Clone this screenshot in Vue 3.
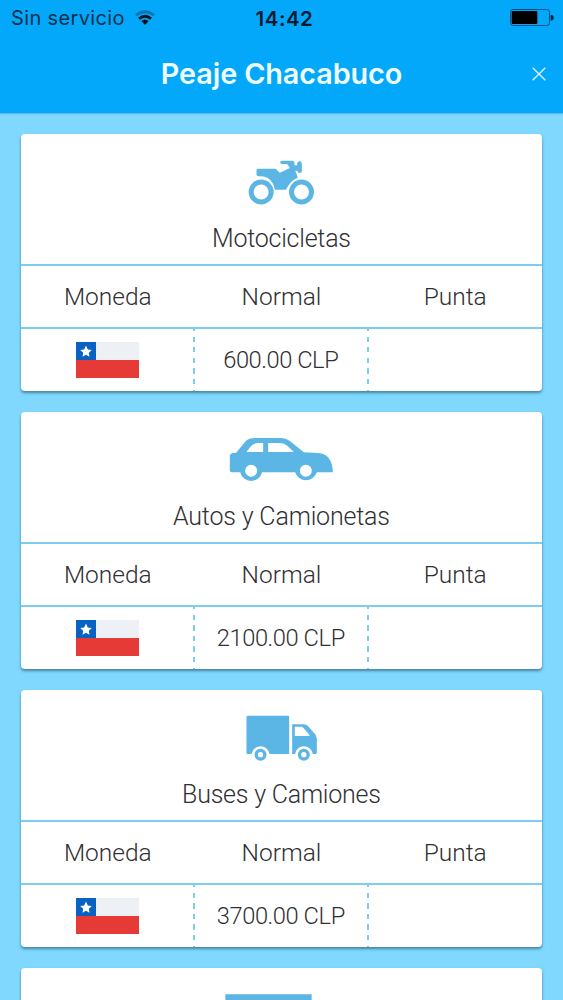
<script setup>
const cards = [
  { kind: 'moto', name: 'Motocicletas', price: '600.00 CLP', box: '-23.5 0 360 210', nameWidth: 139, priceWidth: 115.5 },
  { kind: 'car', name: 'Autos y Camionetas', price: '2100.00 CLP', box: '6.5 -6 360 210', nameWidth: 217, priceWidth: 128.5 },
  { kind: 'truck', name: 'Buses y Camiones', price: '3700.00 CLP', box: '-23.5 3 360 210', nameWidth: 199, priceWidth: 128.5 },
  { kind: 'bus', name: '', price: '', box: '0 0 360 210' }
]
</script>

<template>
  <main class="screen">
    <header class="header">
      <div class="status">
        <div class="carrier">
          <span>Sin servicio</span>
          <svg class="wifi" viewBox="0 0 66 54">
            <path d="M3 16Q33-9 63 16L57 22Q33 3 9 22Z" fill="#0874b4" />
            <path d="M12 26Q33 9 54 26L48 32Q33 20 18 32Z" fill="#02121d" />
            <path d="M22 36Q33 27 44 36L33 48Z" fill="#02121d" />
          </svg>
        </div>
        <strong class="time">14:42</strong>
        <svg class="battery" viewBox="0 0 132 54">
          <rect x="1.5" y="1.5" width="117" height="48" rx="8" fill="none" stroke="#07507b" stroke-width="3" />
          <rect x="5" y="6" width="77" height="39" rx="3" fill="#000" />
          <path d="M122 17Q131 18 131 26T122 35Z" fill="#02233a" />
        </svg>
      </div>
      <div class="titlebar">
        <h1>Peaje Chacabuco</h1>
        <svg class="close" viewBox="0 0 14 14"><path d="M.7.7l12.6 12.6M13.3.7L.7 13.3" /></svg>
      </div>
    </header>

    <section class="list">
      <article v-for="card in cards" :key="card.kind" class="card">
        <div class="vehicle">
          <svg class="icon" :viewBox="card.box">
            <g v-if="card.kind === 'moto'">
              <circle cx="94" cy="141" r="30" fill="none" stroke="#5bb6e5" stroke-width="15" />
              <circle cx="215" cy="141" r="30" fill="none" stroke="#5bb6e5" stroke-width="15" />
              <path d="M84 71H137L150 83L180 69L172 57H156Q151 57 151 52T156 47H187Q194 47 194 55V61H202V54Q204 49 209 49Q216 49 216 55V78Q216 84 210 84Q204 84 202 77H196L204 98Q184 106 175 123L168 134H135Q132 111 113 98Q104 94 87 94Q80 94 80 88V76Q80 71 84 71Z" />
              <path d="M190 76L198 99" stroke="#5bb6e5" stroke-width="9" fill="none" />
            </g>
            <g v-else-if="card.kind === 'car'">
              <path fill-rule="evenodd" d="M30 91Q30 84 49 83L78 48Q87 39 105 39H184Q199 39 210 48L252 82L294 84Q319 85 330 104Q339 119 339 142H291A34 34 0 0 1 226 142H127A34 34 0 0 1 61 142H36Q30 142 30 136ZM80 81H130V54H114Q101 54 92 65ZM145 81H222L202 62Q193 54 181 54H145Z" />
              <circle cx="94" cy="137" r="18" fill="#fff" />
              <circle cx="258" cy="137" r="18" fill="#fff" />
            </g>
            <g v-else-if="card.kind === 'truck'">
              <path d="M53 47H174Q178 47 178 51V162H119Q113 139 92 139T65 162H53Q50 162 50 158V51Q50 47 53 47Z" />
              <path fill-rule="evenodd" d="M187 73H222Q230 73 235 79L256 103Q261 109 261 117V158Q261 162 256 162H249Q243 139 222 139T196 162H187ZM195 80V108H239Q239 104 236 101L221 84Q218 80 213 80Z" />
              <circle cx="92" cy="164" r="13" fill="none" stroke="#5bb6e5" stroke-width="10" />
              <circle cx="222" cy="164" r="13" fill="none" stroke="#5bb6e5" stroke-width="10" />
            </g>
            <path v-else d="M10 46H269V210H10Z" />
          </svg>
          <svg v-if="card.name" class="label" width="320" height="34">
            <text x="159.5" y="25" text-anchor="middle" :textLength="card.nameWidth">{{ card.name }}</text>
          </svg>
        </div>
        <template v-if="card.name">
          <div class="row heads">
            <div>Moneda</div>
            <div>Normal</div>
            <div>Punta</div>
          </div>
          <div class="row values">
            <div>
              <svg class="flag" viewBox="0 0 63 36">
                <path d="M0 0H63V18H0Z" fill="#edf1f6" />
                <path d="M0 18H63V36H0Z" fill="#e63a36" />
                <path d="M0 0H20V18H0Z" fill="#0961c1" />
                <path d="M10 3.5L11.8 7.4L15.8 7.9L12.8 10.7L13.5 14.7L10 12.7L6.5 14.7L7.2 10.7L4.2 7.9L8.2 7.4Z" fill="#fff" />
              </svg>
            </div>
            <div>
              <svg class="price" width="160" height="34">
                <text x="79" y="24.5" text-anchor="middle" :textLength="card.priceWidth">{{ card.price }}</text>
              </svg>
            </div>
            <div></div>
          </div>
        </template>
      </article>
    </section>
  </main>
</template>

<style>
body { margin: 0; overflow: hidden; background: #80d8ff; }
</style>

<style scoped>
.screen {
  width: 563px;
  height: 1000px;
  overflow: hidden;
  background: #80d8ff;
  font-family: Roboto, "Liberation Sans", sans-serif;
  color: #303033;
}
.header { height: 113px; background: #03a8fb; box-shadow: 0 1px 1px #55bceb; }
.status {
  height: 36px;
  display: grid;
  grid-template-columns: 1fr auto 1fr;
  align-items: center;
  padding: 0 9px 0 11px;
  box-sizing: border-box;
  font-family: Inter, "Liberation Sans", sans-serif;
  font-size: 20px;
  color: #06304c;
}
.carrier { display: flex; align-items: center; gap: 9px; letter-spacing: .36px; }
.wifi { width: 22px; height: 18px; }
.time { font-size: 20.5px; font-weight: 600; letter-spacing: .5px; color: #021c2d; margin-left: 4px; }
.battery { width: 44px; height: 18px; justify-self: end; }
.titlebar {
  height: 75px;
  display: grid;
  grid-template-columns: 36px 1fr 36px;
  align-items: center;
}
h1 {
  grid-column: 2;
  margin: 0;
  text-align: center;
  font: 600 28.8px/36px Inter, "Liberation Sans", sans-serif;
  letter-spacing: -.1px;
  color: #effdff;
}
.close { width: 14px; height: 14px; margin-left: 5px; fill: none; stroke: #d8f5ff; stroke-width: 1.4; }
.list { padding: 21px 21px 0; display: flex; flex-direction: column; gap: 21px; }
.card {
  height: 257px;
  flex: none;
  background: #fff;
  border-radius: 4px;
  box-shadow: 0 2px 3px rgba(30, 75, 100, .6);
}
.vehicle {
  height: 132px;
  box-sizing: border-box;
  padding-top: 11px;
  display: flex;
  flex-direction: column;
  align-items: center;
  border-bottom: 2px solid #7ccdef;
}
.icon { width: 120px; height: 70px; fill: #5bb6e5; }
.label { margin-top: 7px; }
.label text { font-size: 25px; font-weight: 300; fill: #303033; }
.price text { font-size: 23.7px; font-weight: 300; fill: #303033; }
.row { display: grid; grid-template-columns: repeat(3, 1fr); }
.row > div { display: flex; align-items: center; justify-content: center; }
.heads {
  height: 63px;
  box-sizing: border-box;
  border-bottom: 2px solid #7ccdef;
  font-size: 24.5px;
  font-weight: 300;
}
.values { height: 62px; grid-template-columns: 174px 174px 1fr; }
.values > div:not(:last-child) {
  background: repeating-linear-gradient(#7ccdea 0 5.3px, #fff 5.3px 10.6px) right -3px / 2px 70px no-repeat;
}
.values > div:first-child { padding-right: 2px; }
.flag { width: 63px; height: 36px; }
</style>
